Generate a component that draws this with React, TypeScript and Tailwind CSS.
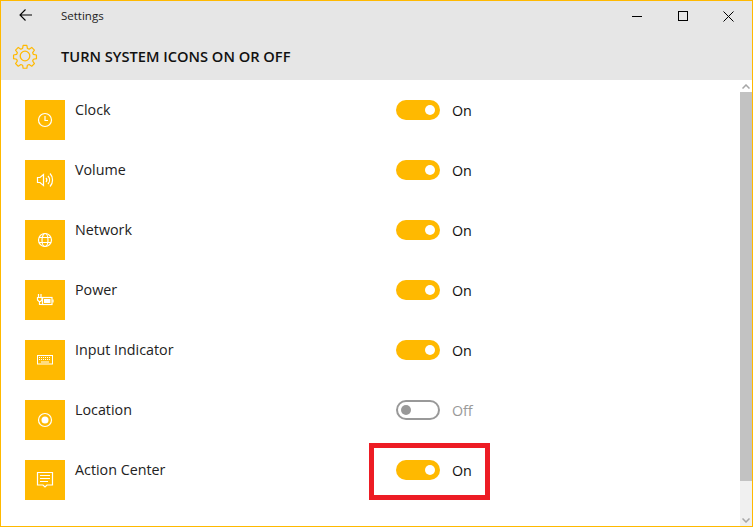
import { ReactNode } from "react";

const iconProps = {
    fill: "none",
    stroke: "white",
    strokeWidth: 1.2,
    width: 20,
    height: 20,
    viewBox: "0 0 20 20",
};

const ClockIcon = () => (
    <svg {...iconProps}>
        <circle cx="10" cy="10" r="6.5" />
        <path d="M10 6v4.500h3" />
    </svg>
);

const VolumeIcon = () => (
    <svg {...iconProps}>
        <path d="M2.500 7.500h2.500l3.500-3v11l-3.500-3H2.500z" />
        <path d="M11 8a3 3 0 0 1 0 4" />
        <path d="M13 6a6 6 0 0 1 0 8" />
        <path d="M15 3.500a9.500 9.500 0 0 1 0 13" />
    </svg>
);

const NetworkIcon = () => (
    <svg {...iconProps}>
        <circle cx="10" cy="10" r="6.500" />
        <ellipse cx="10" cy="10" rx="3" ry="6.500" />
        <path d="M4 7.500h12M4 12.500h12" />
    </svg>
);

const PowerIcon = () => (
    <svg {...iconProps}>
        <path d="M3.500 4v3.500M6 4v3.500M2.500 7.500h4.500v2.500l-1.500 1.500h-1.500l-1.500-1.500zM4.500 11.500v3h3.500" />
        <rect x="7.500" y="7.500" width="9.500" height="7" />
        <rect x="9" y="9" width="6.500" height="4" fill="white" stroke="none" />
        <path d="M18 9.500v3" />
    </svg>
);

const KeyboardIcon = () => (
    <svg {...iconProps} strokeWidth={1}>
        <rect x="2.500" y="5.500" width="15" height="8.500" />
        <path d="M4 7.500h12M4 9.500h12" strokeDasharray="1 1" />
        <path d="M6 12h8" />
    </svg>
);

const LocationIcon = () => (
    <svg {...iconProps}>
        <circle cx="10" cy="10" r="6.500" />
        <circle cx="10" cy="10" r="3.500" fill="white" stroke="none" />
    </svg>
);

const ActionCenterIcon = () => (
    <svg {...iconProps}>
        <path d="M2.500 2.500h15v12.500h-5.500l-2 2-2-2h-5.500z" />
        <path d="M5 5.500h10M5 8.500h10M5 11.500h8" />
    </svg>
);

const GearIcon = () => (
    <svg width="26" height="26" viewBox="0 0 26 26" fill="none" stroke="#ffb900" strokeWidth="1.300" strokeLinejoin="round">
        <path d="M11 1.500h4l.6 3.300 1.900.8 2.800-1.900 2.900 2.900-1.900 2.800.8 1.900 3.300.6v4l-3.300.6-.8 1.900 1.900 2.800-2.900 2.900-2.800-1.900-1.900.8-.6 3.300h-4l-.6-3.300-1.900-.8-2.800 1.900-2.900-2.900 1.900-2.800-.8-1.900-3.300-.6v-4l3.300-.6.8-1.900L2.800 6.600l2.900-2.900 2.800 1.900 1.900-.8z" transform="translate(1 1) scale(.923)" />
        <circle cx="13" cy="13" r="4.800" />
    </svg>
);

const rows: { name: string; icon: ReactNode; on: boolean }[] = [
    { name: "Clock", icon: <ClockIcon />, on: true },
    { name: "Volume", icon: <VolumeIcon />, on: true },
    { name: "Network", icon: <NetworkIcon />, on: true },
    { name: "Power", icon: <PowerIcon />, on: true },
    { name: "Input Indicator", icon: <KeyboardIcon />, on: true },
    { name: "Location", icon: <LocationIcon />, on: false },
    { name: "Action Center", icon: <ActionCenterIcon />, on: true },
];

function Toggle({ on }: { on: boolean }) {
    if (on) {
        return (
            <div className="w-[44px] h-[20px] rounded-full bg-[#ffb900] flex items-center justify-end pr-[5px]">
                <div className="w-[10px] h-[10px] rounded-full bg-white" />
            </div>
        );
    }
    return (
        <div className="w-[44px] h-[20px] rounded-full border-2 border-[#999999] flex items-center pl-[3px]">
            <div className="w-[10px] h-[10px] rounded-full bg-[#999999]" />
        </div>
    );
}

export default function App() {
    return (
        <div className="relative w-[753px] h-[527px] overflow-hidden bg-white border border-[#ffb900] font-['Open_Sans','Noto_Sans',sans-serif] flex flex-col">
            <header className="h-[79px] bg-[#e6e6e6] shrink-0 text-black">
                <div className="h-[30px] flex items-center">
                    <div className="w-[60px] pl-[18px] pb-[2px] shrink-0">
                        <svg width="14" height="12" viewBox="0 0 14 12" fill="none" stroke="black" strokeWidth="1.100">
                            <path d="M13 6H1M6.500.5 1 6l5.500 5.500" />
                        </svg>
                    </div>
                    <span className="text-[11.500px] text-[#222222]">Settings</span>
                    <div className="ml-auto flex items-center">
                        <div className="w-[46px] flex justify-center">
                            <div className="w-[10px] h-px bg-black" />
                        </div>
                        <div className="w-[46px] flex justify-center">
                            <div className="w-[10px] h-[10px] border border-black" />
                        </div>
                        <div className="w-[46px] flex justify-center pr-[1px]">
                            <svg width="11" height="11" viewBox="0 0 11 11" stroke="black" strokeWidth="1">
                                <path d="M.5.500l10 10M10.500.500l-10 10" />
                            </svg>
                        </div>
                    </div>
                </div>
                <div className="h-[49px] flex items-center">
                    <div className="w-[60px] pl-[11px] shrink-0">
                        <GearIcon />
                    </div>
                    <h1 className="pt-[2px] text-[14.650px] font-semibold text-[#111111]">TURN SYSTEM ICONS ON OR OFF</h1>
                </div>
            </header>

            <div className="flex-1 flex min-h-0">
                <main className="flex-1 pl-[24px] pt-[20px] flex flex-col gap-[20px]">
                    {rows.map((row) => (
                        <div key={row.name} className="h-[40px] flex items-start">
                            <div className="w-[40px] h-[40px] bg-[#ffb900] flex items-center justify-center shrink-0">
                                {row.icon}
                            </div>
                            <div className="w-[331px] pl-[10px] text-[14.300px] leading-[20px] text-[#222222] shrink-0">
                                {row.name}
                            </div>
                            <div className="flex items-start">
                                <Toggle on={row.on} />
                                <span className={`ml-[12px] pt-[1px] text-[14.300px] leading-[20px] ${row.on ? "text-[#111111]" : "text-[#999999]"}`}>
                                    {row.on ? "On" : "Off"}
                                </span>
                            </div>
                        </div>
                    ))}
                </main>

                <aside className="w-[12px] shrink-0 bg-[#f0f0f0] flex flex-col">
                    <div className="h-[12px] flex items-center justify-center bg-white">
                        <svg width="8" height="5" viewBox="0 0 8 5" fill="none" stroke="#a6a6a6" strokeWidth="1.500">
                            <path d="M.5 4.500 4 1l3.500 3.500" />
                        </svg>
                    </div>
                    <div className="h-[389px] bg-[#c2c2c2]" />
                    <div className="mt-auto h-[12px] flex items-center justify-center">
                        <svg width="8" height="5" viewBox="0 0 8 5" fill="none" stroke="#a6a6a6" strokeWidth="1.500">
                            <path d="M.5.500 4 4 7.500.500" />
                        </svg>
                    </div>
                </aside>
            </div>

            <div className="absolute left-[368px] top-[442px] w-[121px] h-[57px] border-[5px] border-[#ed1c24]" />
        </div>
    );
}
